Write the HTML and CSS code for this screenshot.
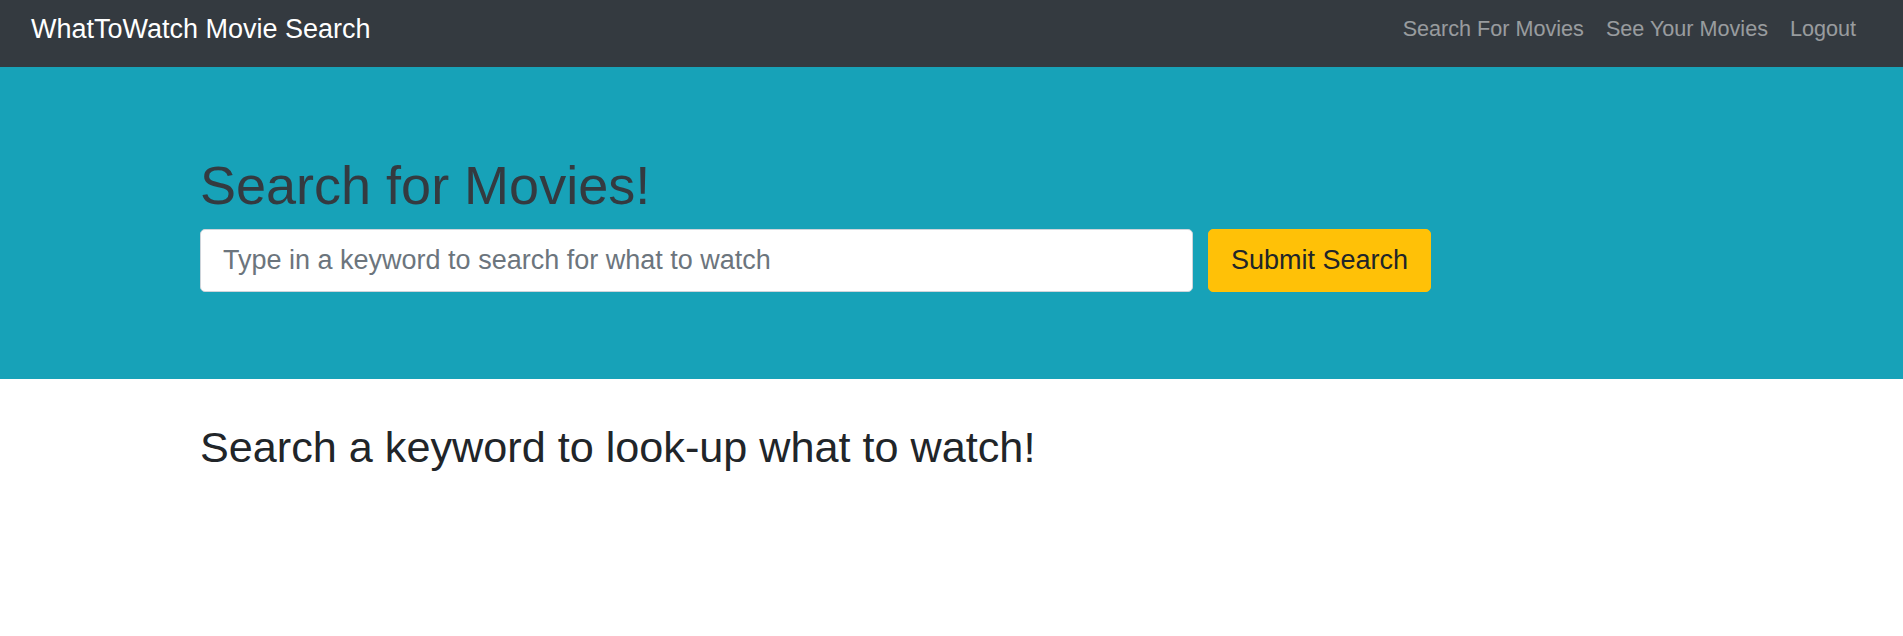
FILE: index.html
```html
<!DOCTYPE html>
<html lang="en">
<head>
<meta charset="utf-8">
<title>WhatToWatch Movie Search</title>
<link rel="stylesheet" href="styles.css">
</head>
<body>
<nav class="navbar">
  <a class="brand" href="#">WhatToWatch Movie Search</a>
  <div class="nav-links">
    <a class="nav-link" href="#">Search For Movies</a>
    <a class="nav-link" href="#">See Your Movies</a>
    <a class="nav-link" href="#">Logout</a>
  </div>
</nav>
<header class="hero">
  <div class="container">
    <h1 class="hero-title">Search for Movies!</h1>
    <form class="search-form">
      <input class="search-input" type="text" placeholder="Type in a keyword to search for what to watch">
      <button class="search-btn" type="button">Submit Search</button>
    </form>
  </div>
</header>
<main class="container">
  <h2 class="results-title">Search a keyword to look-up what to watch!</h2>
</main>
</body>
</html>
```
FILE: styles.css
```css
* { box-sizing: border-box; }
html, body {
  margin: 0;
  padding: 0;
  background: #ffffff;
  font-family: "Liberation Sans", Arial, sans-serif;
  color: #212529;
}
.navbar {
  height: 67px;
  background: #343a40;
  display: flex;
  align-items: center;
  justify-content: space-between;
  padding: 0 36px 9px 31px;
}
.brand {
  color: #ffffff;
  text-decoration: none;
  font-size: 27px;
  line-height: 40.5px;
  white-space: nowrap;
}
.nav-links {
  display: flex;
}
.nav-link {
  color: rgba(255, 255, 255, 0.5);
  text-decoration: none;
  font-size: 21.6px;
  line-height: 32.4px;
  padding: 0 11px;
  white-space: nowrap;
}
.hero {
  background: #17a2b8;
  padding: 86.4px 0 87px;
  margin-bottom: 43.2px;
}
.container {
  width: 1503px;
  margin: 0 auto;
}
.hero-title {
  margin: 0 0 10.8px;
  font-size: 54px;
  line-height: 64.8px;
  font-weight: 400;
  color: #343a40;
}
.search-form {
  display: flex;
  gap: 15px;
}
.search-input {
  width: 993px;
  height: 63px;
  border: 1px solid #ced4da;
  border-radius: 5px;
  padding: 0 22px;
  font-family: inherit;
  font-size: 27px;
  color: #495057;
  background: #ffffff;
  outline: none;
}
.search-input::placeholder {
  color: #6c757d;
}
.search-btn {
  height: 63px;
  width: 223px;
  background: #ffc107;
  border: 1px solid #ffc107;
  border-radius: 5px;
  font-family: inherit;
  font-size: 27px;
  color: #212529;
  padding: 0;
  cursor: pointer;
}
.results-title {
  margin: 0;
  font-size: 43.2px;
  line-height: 51.8px;
  font-weight: 400;
  color: #212529;
}
```
